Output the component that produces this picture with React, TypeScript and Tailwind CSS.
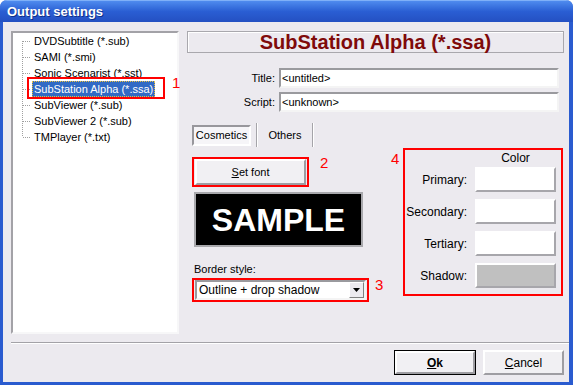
import React from 'react'

const formats = [
  'DVDSubtitle (*.sub)',
  'SAMI (*.smi)',
  'Sonic Scenarist (*.sst)',
  'SubStation Alpha (*.ssa)',
  'SubViewer (*.sub)',
  'SubViewer 2 (*.sub)',
  'TMPlayer (*.txt)',
]

const colorRows = [
  { label: 'Primary:', fill: 'bg-white' },
  { label: 'Secondary:', fill: 'bg-white' },
  { label: 'Tertiary:', fill: 'bg-white' },
  { label: 'Shadow:', fill: 'bg-[#C0C0C0]' },
]

function TreeRow({ text, index, last }: { text: string; index: number; last: boolean }) {
  const selected = index === 3
  return (
    <div className="flex h-[16px] items-center">
      <svg width="19" height="16" className="shrink-0">
        <line
          x1="9.5"
          x2="9.5"
          y1={index === 0 ? 8 : 0}
          y2={last ? 8 : 16}
          stroke="#A0A0A0"
          strokeDasharray="1 1"
        />
        <line x1="10" x2="18" y1="8.5" y2="8.5" stroke="#A0A0A0" strokeDasharray="1 1" />
      </svg>
      <span
        className={
          selected
            ? 'h-[16px] leading-[16px] px-[2px] bg-[#316AC5] text-white outline-1 outline-dotted outline-[#E8C040] -outline-offset-1'
            : 'h-[16px] leading-[16px] px-[2px] text-black'
        }
      >
        {text}
      </span>
    </div>
  )
}

function Field({ label, value }: { label: string; value: string }) {
  return (
    <div className="flex items-center h-[20px]">
      <span className="w-[92px] shrink-0 pr-[4px] text-right">{label}</span>
      <div className="w-[280px] shrink-0 h-[20px] bg-white border-2 border-t-[#9A9A9E] border-l-[#9A9A9E] border-r-[#F4F4F4] border-b-[#F4F4F4] px-[1px] leading-[16px]">
        {value}
      </div>
    </div>
  )
}

export default function App() {
  return (
    <div
      className="relative w-[573px] h-[385px] bg-[#2A5BCF] rounded-t-[7px] flex flex-col overflow-hidden text-[11px] text-black"
      style={{ fontFamily: '"Liberation Sans", Arial, sans-serif' }}
    >
      {/* title bar */}
      <div className="h-[22px] shrink-0 flex items-center px-[7px] bg-gradient-to-b from-[#4F8BEE] via-[#2A5ED3] to-[#2450C2] border-t border-[#7FB0F8]">
        <span className="text-white font-bold text-[13px] [text-shadow:1px_1px_0_#10308A]">Output settings</span>
      </div>

      {/* body */}
      <div className="flex-1 ml-[3px] mr-[4px] mb-[3px] bg-[#ECEAEF] flex flex-col">
        <div className="flex pt-[9px] pl-[8px]">
          {/* format tree */}
          <div className="w-[168px] shrink-0 h-[303px] bg-white border-2 border-t-[#A3A2A7] border-l-[#A3A2A7] border-r-[#F7F7F8] border-b-[#F7F7F8]">
            {formats.map((f, i) => (
              <TreeRow key={f} text={f} index={i} last={i === formats.length - 1} />
            ))}
          </div>

          {/* right panel */}
          <div className="ml-[8px] w-[377px] shrink-0 flex flex-col">
            <div className="h-[22px] border border-[#A9A8AD] shadow-[inset_1px_1px_0_#fff] flex items-center justify-center">
              <span className="text-[#7F0A0A] font-bold text-[20px] leading-none">SubStation Alpha (*.ssa)</span>
            </div>

            <div className="mt-[15px] flex flex-col gap-[4px]">
              <Field label="Title:" value="<untitled>" />
              <Field label="Script:" value="<unknown>" />
            </div>

            <div className="mt-[12px] flex">
              {/* left column */}
              <div className="pl-[5px] w-[182px] shrink-0 flex flex-col">
                <div className="flex items-center h-[22px]">
                  <div className="w-[59px] h-[21px] flex items-center justify-center bg-[#F6F5F8] border-2 border-t-[#98979C] border-l-[#98979C] border-r-white border-b-white">
                    Cosmetics
                  </div>
                  <div className="ml-[5px] w-[2px] h-[24px] border-l border-[#A5A4A9] bg-white" />
                  <div className="w-[54px] text-center">Others</div>
                  <div className="w-[2px] h-[24px] border-l border-[#A5A4A9] bg-white" />
                </div>

                <div className="mt-[11px] w-[117px] h-[30px] border-2 border-[#FF0000]">
                  <div className="ml-[1px] w-[111px] h-[26px] flex items-center justify-center bg-[#F1F0F3] border-2 border-t-white border-l-white border-r-[#9E9DA2] border-b-[#9E9DA2]">
                    <span>
                      <span className="underline">S</span>et font
                    </span>
                  </div>
                </div>

                <div className="mt-[5px] ml-[2px] w-[169px] h-[55px] bg-black border-2 border-[#A8A8AC] flex items-center justify-center">
                  <span className="text-white font-bold text-[32px] leading-none">SAMPLE</span>
                </div>

                <div className="mt-[16px] ml-[2px] leading-[13px]">Border style:</div>

                <div className="mt-[2px] w-[177px] h-[24px] border-2 border-[#FF0000]">
                  <div className="ml-[1px] mt-0 w-[171px] h-[20px] bg-white border-2 border-t-[#9A9A9E] border-l-[#9A9A9E] border-r-[#F4F4F4] border-b-[#F4F4F4] flex items-center">
                    <span className="flex-1 pl-[2px] text-[12px]">Outline + drop shadow</span>
                    <div className="w-[15px] h-[16px] bg-[#ECEAEF] border border-t-white border-l-white border-r-[#808080] border-b-[#808080] flex items-center justify-center">
                      <svg width="7" height="4" viewBox="0 0 7 4">
                        <path d="M0 0h7L3.5 4z" fill="#000" />
                      </svg>
                    </div>
                  </div>
                </div>
              </div>

              {/* color group */}
              <div className="ml-[34px] mt-[24px] w-[160px] shrink-0 h-[148px] border-2 border-[#FF0000] flex flex-col">
                <div className="flex mt-[1px] h-[14px] items-center">
                  <span className="w-[70px]" />
                  <span className="w-[81px] text-center text-[12px]">Color</span>
                </div>
                <div className="mt-[2px] flex flex-col gap-[7px]">
                  {colorRows.map(r => (
                    <div key={r.label} className="flex items-center">
                      <span className="w-[62px] text-right text-[12px]">{r.label}</span>
                      <div
                        className={`ml-[8px] w-[81px] h-[25px] border-2 border-t-white border-l-white border-r-[#A7A6AB] border-b-[#A7A6AB] ${r.fill}`}
                      />
                    </div>
                  ))}
                </div>
              </div>
            </div>
          </div>
        </div>

        {/* separator */}
        <div className="mt-[8px] ml-[8px] h-[2px] border-t border-[#A3A2A7] border-b-white border-b" />

        {/* dialog buttons */}
        <div className="mt-[6px] flex justify-end gap-[7px] pr-[5px]">
          <div className="w-[82px] h-[25px] border border-black">
            <div className="w-full h-full flex items-center justify-center bg-[#F1F0F3] border-2 border-t-white border-l-white border-r-[#9E9DA2] border-b-[#9E9DA2] font-bold text-[12px]">
              <span>
                <span className="underline">O</span>k
              </span>
            </div>
          </div>
          <div className="w-[81px] h-[25px] flex items-center justify-center bg-[#F1F0F3] border-2 border-t-white border-l-white border-r-[#9E9DA2] border-b-[#9E9DA2] text-[12px]">
            <span>
              <span className="underline">C</span>ancel
            </span>
          </div>
        </div>
      </div>

      {/* annotation overlays */}
      <div className="absolute left-[27px] top-[77px] w-[138px] h-[22px] border-2 border-[#FF0000]" />
      <span className="absolute left-[172px] top-[75px] text-[15px] leading-none text-[#FF0000]">1</span>
      <span className="absolute left-[320px] top-[155px] text-[15px] leading-none text-[#FF0000]">2</span>
      <span className="absolute left-[375px] top-[277px] text-[15px] leading-none text-[#FF0000]">3</span>
      <span className="absolute left-[391px] top-[151px] text-[15px] leading-none text-[#FF0000]">4</span>
    </div>
  )
}
